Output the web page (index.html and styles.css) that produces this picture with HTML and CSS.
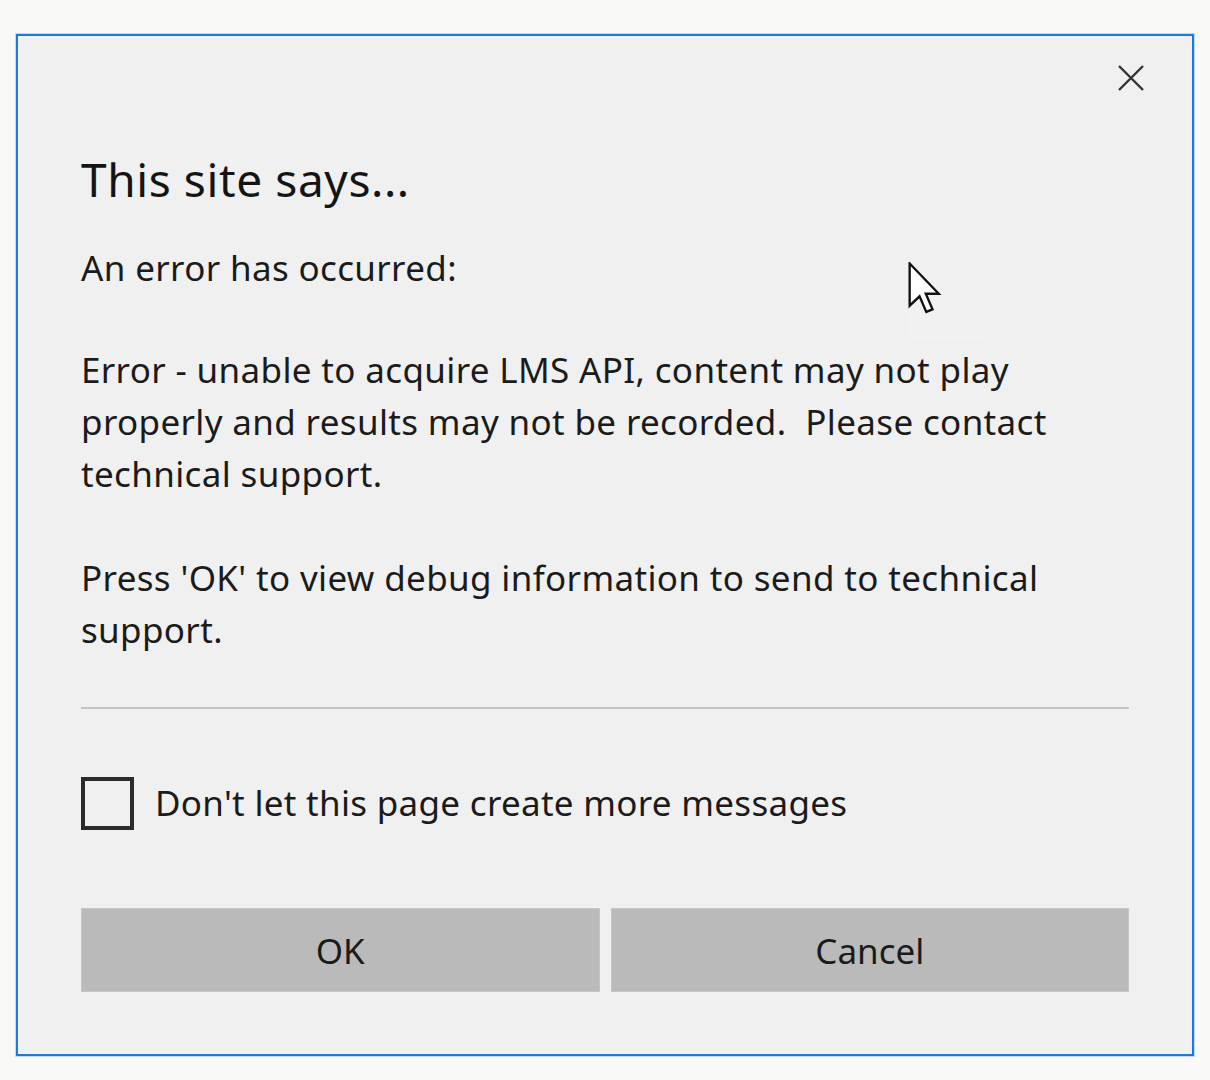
FILE: index.html
```html
<!DOCTYPE html>
<html>
<head>
<meta charset="utf-8">
<link rel="stylesheet" href="styles.css">
</head>
<body>
<div class="dialog">
  <div class="topbar">
    <button class="close" aria-label="Close">
      <svg width="28" height="28" viewBox="0 0 28 28"><path d="M2 2 L26 26 M26 2 L2 26" stroke="#333" stroke-width="2.4" fill="none"/></svg>
    </button>
  </div>
  <h1 class="title">This site says...</h1>
  <div class="message">
    <p class="lead">An error has occurred:</p>
    <p class="first">Error - unable to acquire LMS API, content may not play properly and results may not be recorded.&nbsp; Please contact technical support.</p>
    <p class="second">Press 'OK' to view debug information to send to technical support.</p>
  </div>
  <hr class="sep">
  <label class="check">
    <span class="box"></span>
    <span class="check-label">Don't let this page create more messages</span>
  </label>
  <div class="buttons">
    <button class="btn">OK</button>
    <button class="btn">Cancel</button>
  </div>
  <div class="cursor-area">
    <svg width="34" height="52" viewBox="0 0 13 20"><path d="M0.6 0.6 L0.6 16.8 L4.4 13.2 L7 19.2 L9.4 18.2 L6.8 12.2 L11.8 12.2 Z" fill="#fff" stroke="#111" stroke-width="0.9" stroke-linejoin="miter"/></svg>
  </div>
</div>
</body>
</html>
```

FILE: styles.css
```css
* { box-sizing: border-box; }
html, body { margin: 0; padding: 0; }
body {
  background: #f9f9f8;
  font-family: "Noto Sans", "Open Sans", sans-serif;
  color: #1b1b1b;
  padding: 34px 16px 24px 16px;
}
.dialog {
  position: relative;
  width: 1178px;
  height: 1022px;
  background: #f0f0f0;
  border: 2px solid #1b7ae0;
  box-shadow: 0 0 0 1px rgba(27,122,224,0.25);
  padding: 0 63px;
}
.topbar {
  display: flex;
  justify-content: flex-end;
  height: 113px;
  margin-right: -26px;
  padding-top: 20px;
}
.close {
  width: 48px;
  height: 44px;
  border: 0;
  background: transparent;
  padding: 0;
  display: flex;
  align-items: center;
  justify-content: center;
}
.title {
  margin: 0;
  font-weight: 400;
  font-size: 46px;
  letter-spacing: 0.6px;
  line-height: 60px;
  color: #141414;
}
.message {
  margin-top: 33px;
}
.message p {
  margin: 0;
  font-size: 35px;
  letter-spacing: 0.35px;
  line-height: 52px;
}
.message .first {
  margin-top: 50px;
}
.message .second {
  margin-top: 52px;
}
.sep {
  margin: 51px 0 0 0;
  border: 0;
  border-top: 2px solid #c4c4c4;
  height: 0;
}
.check {
  display: flex;
  align-items: center;
  margin-top: 67px;
  height: 54px;
}
.box {
  width: 53px;
  height: 53px;
  border: 4px solid #2b2b2b;
  background: transparent;
  flex: none;
}
.check-label {
  margin-left: 21px;
  font-size: 35px;
  letter-spacing: 0.3px;
  line-height: 52px;
}
.buttons {
  display: grid;
  grid-template-columns: 1fr 1fr;
  gap: 11px;
  margin-top: 78px;
}
.btn {
  height: 84px;
  background: #bababa;
  border: 1px solid #c6c6c6;
  font-family: "Noto Sans", "Open Sans", sans-serif;
  font-size: 35px;
  color: #1b1b1b;
  padding: 0;
}
.cursor-area {
  position: absolute;
  left: 890px;
  top: 226px;
  width: 82px;
  height: 78px;
  background: #f1f1f1;
}
.cursor-area svg {
  display: block;
}
```
